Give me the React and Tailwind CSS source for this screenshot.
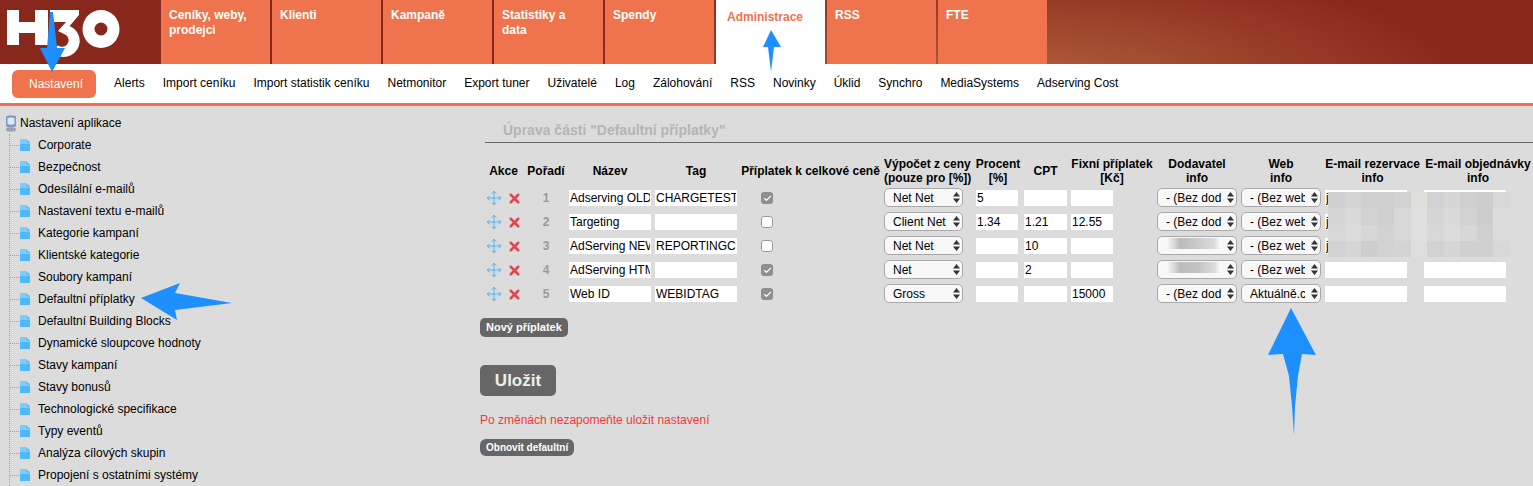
import { Check, Move, X } from 'lucide-react';

const tabs = [
  { label: 'Ceníky, weby, prodejci' },
  { label: 'Klienti' },
  { label: 'Kampaně' },
  { label: 'Statistiky a data' },
  { label: 'Spendy' },
  { label: 'Administrace', active: true },
  { label: 'RSS' },
  { label: 'FTE' },
];

const subnav = ['Alerts', 'Import ceníku', 'Import statistik ceníku', 'Netmonitor', 'Export tuner', 'Uživatelé', 'Log', 'Zálohování', 'RSS', 'Novinky', 'Úklid', 'Synchro', 'MediaSystems', 'Adserving Cost'];

const tree = ['Corporate', 'Bezpečnost', 'Odesílální e-mailů', 'Nastavení textu e-mailů', 'Kategorie kampaní', 'Klientské kategorie', 'Soubory kampaní', 'Defaultní příplatky', 'Defaultní Building Blocks', 'Dynamické sloupcove hodnoty', 'Stavy kampaní', 'Stavy bonusů', 'Technologické specifikace', 'Typy eventů', 'Analýza cílových skupin', 'Propojení s ostatními systémy'];

const rows = [
  { n: 1, name: 'Adserving OLD', tag: 'CHARGETEST', checked: true, calc: 'Net Net', pct: '5', cpt: '', fixed: '', vendor: '- (Bez dodavatele)', web: '- (Bez webu)', mail: 'j' },
  { n: 2, name: 'Targeting', tag: '', checked: false, calc: 'Client Net', pct: '1.34', cpt: '1.21', fixed: '12.55', vendor: '- (Bez dodavatele)', web: '- (Bez webu)', mail: 'j' },
  { n: 3, name: 'AdServing NEW', tag: 'REPORTINGCOST', checked: false, calc: 'Net Net', pct: '', cpt: '10', fixed: '', vendor: '', web: '- (Bez webu)', mail: 'j' },
  { n: 4, name: 'AdServing HTML', tag: '', checked: true, calc: 'Net', pct: '', cpt: '2', fixed: '', vendor: '', web: '- (Bez webu)', mail: '' },
  { n: 5, name: 'Web ID', tag: 'WEBIDTAG', checked: true, calc: 'Gross', pct: '', cpt: '', fixed: '15000', vendor: '- (Bez dodavatele)', web: 'Aktuálně.cz', mail: '' },
];

const mosaic = [
  '#d0d0d0', '#d4d4d4', '#cfcfcf', '#cfcfcf', '#d2d2d2', '#dfdfdc', '#d2d2d4', '#d6d6d6', '#cfcfcf', '#cdcdcd', '#d8d8d8',
  '#d6d6d8', '#dadada', '#d2d2d2', '#cfcfcf', '#d8d8d8', '#e0e0e0', '#d6d6d8', '#dadada', '#d2d2d2', '#cdcdcd', '#dcdcdc',
  '#d8d8da', '#dcdcdc', '#d6d8d6', '#d2d2d2', '#d8d8d8', '#e0e0e0', '#d8d8da', '#dcdcdc', '#d6d8d6', '#d0d0d0', '#dcdcdc',
  '#d2d2d4', '#d6d6d6', '#cdcdcd', '#d2d2d2', '#d4d4d4', '#dedee0', '#d2d2d2', '#d6d6d6', '#cfd1cf', '#d0d0d0', '#d8d8d8',
];

function Logo() {
  return (
    <svg width="125" height="60" viewBox="0 0 125 60" className="block">
      <path d="M7 10h12v12h16V10h13v35H35V33H19v12H7z" fill="#fff" />
      <polygon points="50,10 79,10 79,15 68,28 66,35 58,31 66,22 50,22" fill="#fff" />
      <path d="M68 25.500A16 16 0 1 1 50.500 50L58 45.500A6.500 6.500 0 1 0 66 35Z" fill="#fff" />
      <path fillRule="evenodd" d="M101 10a18.500 19 0 1 1 0 38 18.500 19 0 0 1 0-38zm0 12.500a6.500 6.500 0 1 0 0 13 6.500 6.500 0 0 0 0-13z" fill="#fff" />
    </svg>
  );
}

function PageIcon() {
  return (
    <svg width="10" height="12" viewBox="0 0 10 12" className="shrink-0">
      <path d="M0 0h6l4 3.500V12H0z" fill="#4db8fb" />
      <path d="M0 0h6l1 3.500h3V5H0z" fill="#7dcdfb" />
    </svg>
  );
}

function RootIcon() {
  return (
    <svg width="13" height="17" viewBox="0 0 13 17" className="shrink-0">
      <path d="M2 1.500C4 0 10 0 12 1.500V11c-2 2-8 2-10 0z" fill="#7f97c4" />
      <path d="M3.500 3c2-.8 5-.8 7 0v6c-2 1-5 1-7 0z" fill="#dbe8fa" />
      <ellipse cx="7" cy="14.500" rx="5" ry="2.200" fill="#9aa3b5" />
    </svg>
  );
}

function Field({ value, width }) {
  return (
    <input
      readOnly
      value={value}
      className={`${width} h-4 bg-white border-0 px-[1px] text-[12px] leading-4 text-black outline-none block`}
    />
  );
}

function Pick({ value, width }) {
  return (
    <div className={`${width} relative h-[19px] mb-[1px]`}>
      <select
        defaultValue={value}
        className="w-full h-full appearance-none bg-[#f8f8f8] border border-[#a9a9a9] rounded-[5px] pl-[8px] pr-[15px] text-[12px] text-black outline-none"
      >
        <option>{value}</option>
      </select>
      <svg width="7" height="11" viewBox="0 0 7 11" className="absolute right-[3px] top-[4px] text-[#333]">
        <path d="M3.500 0L7 4.500H0zM3.500 11L0 6.500h7z" fill="currentColor" />
      </svg>
    </div>
  );
}

function Box({ checked }) {
  return checked ? (
    <span className="flex w-3 h-3 items-center justify-center rounded-[3px] bg-[#8f8f8f] text-white">
      <Check size={9} strokeWidth={3} />
    </span>
  ) : (
    <span className="block w-3 h-3 rounded-[3px] bg-white border border-[#9a9a9a]" />
  );
}

function Arrow({ className, width, height, points }) {
  return (
    <svg width={width} height={height} className={`absolute ${className}`}>
      <polygon points={points} fill="#1e8fff" />
    </svg>
  );
}

export default function App() {
  return (
    <div className="relative w-[1533px] h-[486px] overflow-hidden bg-[#dcdcdc] font-['Liberation_Sans',Arial,sans-serif] text-[12px] text-black">
      <header className="flex h-16 bg-[radial-gradient(ellipse_460px_130px_at_1010px_85px,#b3623c,#88271c)]">
        <div className="w-[161px] shrink-0">
          <Logo />
        </div>
        <nav className="flex gap-[2px]">
          {tabs.map(tab => (
            <div
              key={tab.label}
              className={`w-[109px] pr-5 text-[12px] leading-[15px] font-bold ${tab.active ? 'bg-white text-[#ef734c] pl-[11px] pt-[10px]' : 'bg-[#ef734c] text-white pl-2 pt-[8px]'}`}
            >
              {tab.label}
            </div>
          ))}
        </nav>
      </header>

      <div className="flex items-center gap-[18px] h-[42px] pl-3 pt-[1px] bg-white border-b-[3px] border-[#ef734c]">
        <span className="flex items-center h-7 pl-[17px] pr-[13px] pb-[1px] rounded-[6px] bg-[#ef734c] text-white">Nastavení</span>
        {subnav.map(item => <span key={item} className="pb-[2px]">{item}</span>)}
      </div>

      <div className="flex">
        <aside className="w-[485px] shrink-0 pt-[6px] pl-1">
          <div className="flex items-center gap-[3px] h-[22px]">
            <RootIcon />
            <span>Nastavení aplikace</span>
          </div>
          <ul className="ml-[5px] border-l border-dotted border-[#a0a0a0]">
            {tree.map(item => (
              <li key={item} className="flex items-center h-[22px]">
                <span className="w-[9px] mr-[1px] border-t border-dotted border-[#a0a0a0]" />
                <PageIcon />
                <span className="ml-[8px]">{item}</span>
              </li>
            ))}
          </ul>
        </aside>

        <main className="flex-1 pt-[14px]">
          <h2 className="h-[23px] pl-[18px] border-b border-[#666] text-[14px] leading-[20px] font-bold text-[#b5b5b5]">Úprava části "Defaultní příplatky"</h2>

          <table className="mt-[12px] ml-[1px] table-fixed border-collapse w-[1048px]">
            <colgroup>
              <col className="w-[39px]" />
              <col className="w-[42px]" />
              <col className="w-[86px]" />
              <col className="w-[86px]" />
              <col className="w-[143px]" />
              <col className="w-[91px]" />
              <col className="w-[49px]" />
              <col className="w-[47px]" />
              <col className="w-[86px]" />
              <col className="w-[84px]" />
              <col className="w-[84px]" />
              <col className="w-[99px]" />
              <col className="w-[112px]" />
            </colgroup>
            <thead>
              <tr className="h-[31px] text-center font-bold leading-[14px]">
                <th className="pr-1">Akce</th>
                <th>Pořadí</th>
                <th>Název</th>
                <th>Tag</th>
                <th className="whitespace-nowrap">Příplatek k celkové ceně</th>
                <th className="whitespace-nowrap text-left pl-[2px]">Výpočet z ceny<br />(pouze pro [%])</th>
                <th className="pl-[1px]">Procent<br />[%]</th>
                <th>CPT</th>
                <th className="whitespace-nowrap">Fixní příplatek<br />[Kč]</th>
                <th>Dodavatel<br />info</th>
                <th>Web<br />info</th>
                <th className="whitespace-nowrap">E-mail rezervace<br />info</th>
                <th className="whitespace-nowrap">E-mail objednávky<br />info</th>
              </tr>
            </thead>
            <tbody>
              {rows.map(row => (
                <tr key={row.n} className="h-6">
                  <td>
                    <span className="flex items-center gap-[5px]">
                      <Move size={16} strokeWidth={1.5} className="text-[#4db2f2]" />
                      <X size={15} strokeWidth={4} className="text-[#ea4149]" />
                    </span>
                  </td>
                  <td className="text-center font-bold text-[#999]">{row.n}</td>
                  <td><div className="pl-[2px]"><Field value={row.name} width="w-[82px]" /></div></td>
                  <td><div className="pl-[2px]"><Field value={row.tag} width="w-[82px]" /></div></td>
                  <td><div className="pl-[22px]"><Box checked={row.checked} /></div></td>
                  <td><div className="pl-[2px]"><Pick value={row.calc} width="w-[79px]" /></div></td>
                  <td><div className="pl-[3px]"><Field value={row.pct} width="w-[42px]" /></div></td>
                  <td><div className="pl-[2px]"><Field value={row.cpt} width="w-[43px]" /></div></td>
                  <td><div className="pl-[2px]"><Field value={row.fixed} width="w-[42px]" /></div></td>
                  <td><div className="pl-[2px]"><Pick value={row.vendor} width="w-[80px]" /></div></td>
                  <td><div className="pl-[2px]"><Pick value={row.web} width="w-[80px]" /></div></td>
                  <td><div className="pl-[2px]"><Field value={row.mail} width="w-[82px]" /></div></td>
                  <td><div className="pl-[2px]"><Field value="" width="w-[82px]" /></div></td>
                </tr>
              ))}
            </tbody>
          </table>

          <div className="-ml-[5px]">
            <button className="block mt-[12px] h-[19px] px-[6px] rounded-[5px] bg-[#666] text-white text-[11px] font-bold leading-[19px]">Nový příplatek</button>
            <button className="block mt-[28px] w-[76px] h-[31px] rounded-[5px] bg-[#666] text-[#eee] text-[17px] font-bold">Uložit</button>
            <p className="mt-[17px] leading-[14px] text-[#f03a3a]">Po změnách nezapomeňte uložit nastavení</p>
            <button className="block mt-[12px] h-[17px] px-[6px] rounded-[6px] bg-[#666] text-white text-[10px] font-bold leading-[17px]">Obnovit defaultní</button>
          </div>
        </main>
      </div>

      {/* rozmazane maily */}
      <div className="absolute left-[1328px] top-[192px] w-[182px] h-[65px] grid grid-cols-11 grid-rows-4">
        {mosaic.map((c, i) => <span key={i} style={{ backgroundColor: c }} />)}
      </div>
      <div className="absolute left-[1167px] top-[238px] w-[53px] h-[11px] bg-[linear-gradient(90deg,#f8f8f8,#bbb_25%,#ccc_60%,#ddd_90%,#f8f8f8)]" />
      <div className="absolute left-[1167px] top-[262px] w-[53px] h-[11px] bg-[linear-gradient(90deg,#f8f8f8,#bbb_25%,#c4c4c4_60%,#ddd_90%,#f8f8f8)]" />

      {/* sipky */}
      <Arrow className="left-[38px] top-[12px]" width="30" height="62" points="12,0 15,0 19,36 27,36 14,60 2,36 9,36" />
      <Arrow className="left-[758px] top-[28px]" width="26" height="46" points="13,2 23,19 16,19 13,44 10,19 5,19" />
      <Arrow className="left-[140px] top-[280px]" width="94" height="42" points="1,18 40,3 35,13 92,23 35,30 37,40" />
      <Arrow className="left-[1266px] top-[306px]" width="52" height="132" points="25,2 50,49 36,48 32,70 29,100 28,129 26,100 23,70 17,48 2,49" />
    </div>
  );
}
